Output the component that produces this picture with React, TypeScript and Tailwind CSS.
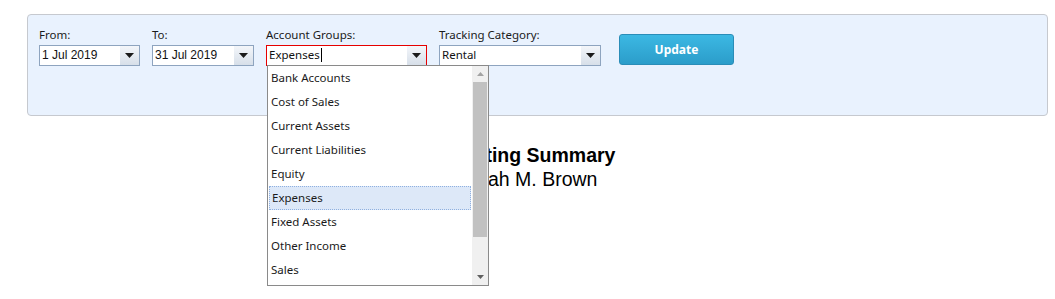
import React from "react";

const Tri = () => (
  <svg width="9" height="5" viewBox="0 0 9 5" className="block">
    <path d="M0 0 H9 L4.5 5 Z" fill="#1a1a1a" />
  </svg>
);

function Combo({
  value,
  width,
  focus,
  arial,
  caret,
}: {
  value: string;
  width: string;
  focus?: boolean;
  arial?: boolean;
  caret?: boolean;
}) {
  return (
    <div
      className={`flex h-[21px] ${width} border bg-white ${
        focus ? "border-[#e60000]" : "border-[#8ea4bf]"
      }`}
    >
      <div
        className={`flex flex-1 items-center pl-[2px] pb-[1px] text-[#111] ${
          arial ? "font-['Liberation_Sans',sans-serif] text-[12px]" : "text-[11.5px]"
        }`}
      >
        {value}
        {caret && <span className="ml-[1px] inline-block h-[14px] w-px bg-black" />}
      </div>
      <div className="flex w-[19px] items-center justify-center bg-gradient-to-b from-[#f3f6fa] to-[#d7dfe9]">
        <Tri />
      </div>
    </div>
  );
}

export default function App() {
  const items = [
    "Bank Accounts",
    "Cost of Sales",
    "Current Assets",
    "Current Liabilities",
    "Equity",
    "Expenses",
    "Fixed Assets",
    "Other Income",
    "Sales",
  ];
  return (
    <div className="relative h-[299px] w-[1055px] bg-white font-['Noto_Sans',sans-serif] text-[#1a1a1a]">
      <div className="pl-[27px] pr-[7px] pt-[14px]">
        <div className="flex h-[102px] items-start gap-[12px] rounded-[4px] border border-[#c6c9cf] bg-[#e9f2fe] pl-[11px] pt-[11px]">
          <div className="flex flex-col gap-[2px]">
            <div className="text-[11.5px] leading-[17px]">From:</div>
            <Combo value="1 Jul 2019" width="w-[101px]" arial />
          </div>
          <div className="flex flex-col gap-[2px]">
            <div className="text-[11.5px] leading-[17px]">To:</div>
            <Combo value="31 Jul 2019" width="w-[102px]" arial />
          </div>
          <div className="relative flex flex-col gap-[2px]">
            <div className="text-[11.5px] leading-[17px]">Account Groups:</div>
            <Combo value="Expenses" width="w-[161px]" focus caret />
          </div>
          <div className="flex flex-col gap-[2px]">
            <div className="text-[11.5px] leading-[17px]">Tracking Category:</div>
            <Combo value="Rental" width="w-[162px]" />
          </div>
          <button className="ml-[6px] mt-[8px] h-[31px] w-[115px] rounded-[3px] border border-[#2a8db8] bg-gradient-to-b from-[#3cb8e3] to-[#2b9dca] text-[12px] font-bold text-white">
            Update
          </button>
        </div>
      </div>

      <div className="mt-[27px] flex flex-col items-center font-['Liberation_Sans',sans-serif] text-[19.5px] leading-[24px] text-black">
        <div className="mr-[4px] font-bold">Counting Summary</div>
        <div>Sarah M. Brown</div>
      </div>

      <div className="absolute left-[267px] top-[65px] flex h-[221px] w-[222px] border border-[#8a8a8a] bg-white">
        <div className="flex-1 px-[1px] pt-0">
          {items.map((it) => (
            <div
              key={it}
              className={`flex h-[24px] items-center pb-[1px] pl-[2px] text-[11.5px] ${
                it === "Expenses"
                  ? "border border-dotted border-[#8fb0e0] bg-[#dde8f8] pl-[1px]"
                  : ""
              }`}
            >
              {it}
            </div>
          ))}
        </div>
        <div className="flex w-[16px] flex-col bg-[#f0f0f0]">
          <div className="flex h-[16px] items-center justify-center">
            <svg width="7" height="4" viewBox="0 0 7 4">
              <path d="M0 4 H7 L3.5 0 Z" fill="#a3a3a3" />
            </svg>
          </div>
          <div className="mx-[1px] h-[155px] bg-[#c1c1c1]" />
          <div className="flex-1" />
          <div className="flex h-[16px] items-center justify-center">
            <svg width="7" height="4" viewBox="0 0 7 4">
              <path d="M0 0 H7 L3.5 4 Z" fill="#606060" />
            </svg>
          </div>
        </div>
      </div>
    </div>
  );
}
